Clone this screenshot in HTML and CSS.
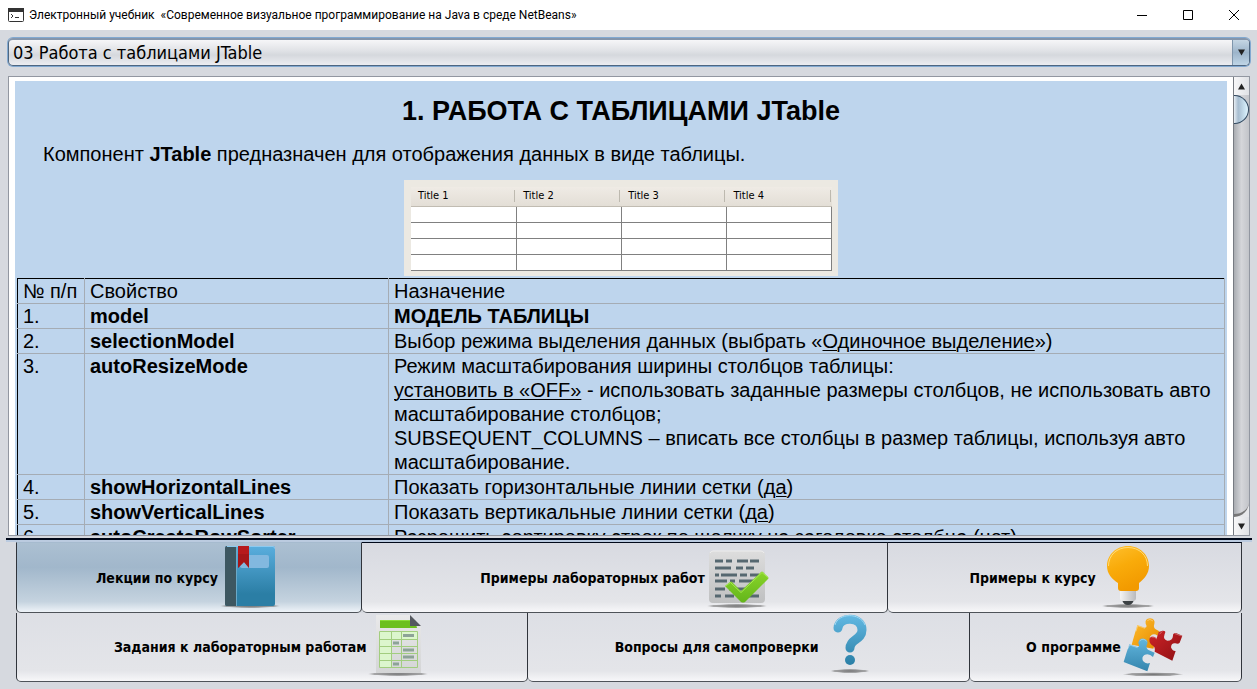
FILE: index.html
```html
<!DOCTYPE html>
<html lang="ru">
<head>
<meta charset="utf-8">
<title>Электронный учебник «Современное визуальное программирование на Java в среде NetBeans»</title>
<link rel="stylesheet" href="styles.css">
</head>
<body>
<div class="window">
  <header class="titlebar">
    <svg class="app-icon" viewBox="0 0 16 14"><rect x="0.5" y="0.5" width="15" height="13" rx="1" fill="#fff" stroke="#333"/><path d="M0 0h16v4H0z" fill="#333"/><path d="M3 6l2 2-2 2M7 9.500h4" fill="none" stroke="#333"/></svg>
    <span class="caption">Электронный учебник&nbsp; «Современное визуальное программирование на Java в среде NetBeans»</span>
    <div class="window-buttons">
      <button type="button" aria-label="Свернуть"><svg viewBox="0 0 12 12"><path d="M1 6.500h10"/></svg></button>
      <button type="button" aria-label="Развернуть"><svg viewBox="0 0 12 12"><path d="M1.500 1.500h9v9h-9z"/></svg></button>
      <button type="button" aria-label="Закрыть"><svg viewBox="0 0 12 12"><path d="M1 1l10 10M11 1L1 11"/></svg></button>
    </div>
  </header>

  <main class="workspace">
    <div class="combo">
      <select aria-label="Раздел"><option>03 Работа с таблицами JTable</option></select>
      <span class="combo-arrow"><svg viewBox="0 0 8 7"><path d="M0 0h8L4 7z"/></svg></span>
    </div>

    <section class="scroll-pane">
      <div class="viewport">
        <article class="document">
          <h1>1. РАБОТА С ТАБЛИЦАМИ JTable</h1>
          <p class="intro">Компонент <b>JTable</b> предназначен для отображения данных в виде таблицы.</p>
          <div class="sample">
            <table>
              <thead><tr><th>Title 1</th><th>Title 2</th><th>Title 3</th><th>Title 4</th></tr></thead>
              <tbody>
                <tr><td></td><td></td><td></td><td></td></tr>
                <tr><td></td><td></td><td></td><td></td></tr>
                <tr><td></td><td></td><td></td><td></td></tr>
                <tr><td></td><td></td><td></td><td></td></tr>
              </tbody>
            </table>
          </div>
          <table class="properties">
            <colgroup><col class="col-number"><col class="col-name"><col></colgroup>
            <tbody>
              <tr><td>№ п/п</td><td>Свойство</td><td>Назначение</td></tr>
              <tr><td>1.</td><td><b>model</b></td><td><b>МОДЕЛЬ ТАБЛИЦЫ</b></td></tr>
              <tr><td>2.</td><td><b>selectionModel</b></td><td>Выбор режима выделения данных (выбрать «<u>Одиночное выделение</u>»)</td></tr>
              <tr><td>3.</td><td><b>autoResizeMode</b></td><td>Режим масштабирования ширины столбцов таблицы:<br><u>установить в «OFF»</u> - использовать заданные размеры столбцов, не использовать авто масштабирование столбцов;<br>SUBSEQUENT_COLUMNS – вписать все столбцы в размер таблицы, используя авто масштабирование.</td></tr>
              <tr><td>4.</td><td><b>showHorizontalLines</b></td><td>Показать горизонтальные линии сетки (<u>да</u>)</td></tr>
              <tr><td>5.</td><td><b>showVerticalLines</b></td><td>Показать вертикальные линии сетки (<u>да</u>)</td></tr>
              <tr><td>6.</td><td><b>autoCreateRowSorter</b></td><td>Разрешить сортировку строк по щелчку на заголовке столбца (<u>нет</u>)</td></tr>
            </tbody>
          </table>
        </article>
      </div>
      <div class="scrollbar">
        <button type="button" class="up" aria-label="Вверх"><svg viewBox="0 0 8 7"><path d="M0 7h8L4 0z"/></svg></button>
        <div class="track"><div class="thumb"></div></div>
        <button type="button" class="down" aria-label="Вниз"><svg viewBox="0 0 8 7"><path d="M0 0h8L4 7z"/></svg></button>
      </div>
    </section>

    <div class="divider"></div>

    <nav class="tabs">
      <div class="tab-row first">
        <button type="button" class="tab lectures selected"><span>Лекции по курсу</span>
          <svg class="icon" viewBox="0 0 64 64">
            <defs><linearGradient id="cover" x2="0" y2="1"><stop stop-color="#5aaede"/><stop offset=".8" stop-color="#2b7ea5"/><stop offset="1" stop-color="#2b7ea5"/></linearGradient>
            <radialGradient id="shade"><stop stop-color="#555" stop-opacity=".8"/><stop offset=".8" stop-color="#777" stop-opacity=".6"/><stop offset="1" stop-color="#999" stop-opacity="0"/></radialGradient></defs>
            <ellipse cx="32" cy="62" rx="31" ry="2" fill="url(#shade)"/>
            <rect x="7" y="2" width="50" height="60" rx="2" fill="url(#cover)"/>
            <path d="M9 2h9v60H9q-2 0-2-2V4q0-2 2-2z" fill="#3d5761"/><path d="M18.500 2v60" stroke="#6aa9c8" fill="none"/>
            <path d="M9 2.500h46q1.500 0 1.500 2" stroke="#8ccaf0" fill="none"/>
            <rect x="22" y="11" width="29" height="13" rx="2" fill="#82b8df"/>
            <path d="M20 2h11v22l-5-6-6 6z" fill="#b7191c"/><path d="M20 10h11v14l-5-6-6 6z" fill="#941316" opacity=".5"/>
          </svg></button>
        <button type="button" class="tab examples"><span>Примеры лабораторных работ</span>
          <svg class="icon" viewBox="0 0 64 64">
            <defs><linearGradient id="card" x2="0" y2="1"><stop stop-color="#ddd"/><stop offset="1" stop-color="#bfc0c1"/></linearGradient><linearGradient id="tick" x2="0" y2="1"><stop stop-color="#8ad52a"/><stop offset="1" stop-color="#63b51a"/></linearGradient></defs>
            <ellipse cx="32" cy="62" rx="31" ry="2" fill="url(#shade)"/>
            <rect x="4" y="7" width="56" height="52" rx="4" fill="url(#card)"/><path d="M5 9q1-2 3-2h48q2 0 3 2" stroke="#eee" fill="none"/>
            <path d="M10 17h8m3 0h6m5 0h11m2 0h9M10 24h16m5 0h7m3 0h8M10 31h4m2 0h16m3 0h7m3 0h9M10 37h12m3 0h5m4 0h14M10 45h10m4 0h20M10 52h6m4 0h9m13 0h12" stroke="#566870" stroke-width="3" fill="none"/>
            <path d="M20 42l5-4q1-1 2 0l9 9 20-19q1-1 2 0l5 5q1 1 0 2L40 58q-2 1-4 0z" fill="url(#tick)"/><path d="M20.500 42l5-3.500 10.500 10L57 28.500l6 5" stroke="#a5e853" fill="none"/>
          </svg></button>
        <button type="button" class="tab course-examples"><span>Примеры к курсу</span>
          <svg class="icon" viewBox="0 0 64 64">
            <defs><linearGradient id="bulb" x1="0" y1="0" x2=".4" y2="1"><stop stop-color="#ffc02e"/><stop offset=".5" stop-color="#f9ab0a"/><stop offset="1" stop-color="#f29a00"/></linearGradient><linearGradient id="cap"><stop stop-color="#f4f4f4"/><stop offset="1" stop-color="#b9babd"/></linearGradient></defs>
            <ellipse cx="32" cy="62" rx="27" ry="2" fill="url(#shade)"/>
            <path d="M26 55h12q-1 6-6 6t-6-6z" fill="#3b4043"/>
            <path d="M24 47h16v7q0 3-3 3H27q-3 0-3-3z" fill="url(#cap)"/>
            <path d="M32 2c12 0 21 9 21 20 0 8-5 13-10 17v5q0 3-3 3H25q-3 0-3-3v-5c-6-4-11-9-11-17C11 11 20 2 32 2z" fill="url(#bulb)"/>
            <path d="M12.500 22C12.500 11 21 3.500 32 3.500S51.500 11 51.500 22" fill="none" stroke="#ffdc7a"/>
          </svg></button>
      </div>
      <div class="tab-row second">
        <button type="button" class="tab tasks"><span>Задания к лабораторным работам</span>
          <svg class="icon" viewBox="0 0 64 64">
            <defs><linearGradient id="paper" x2="0" y2="1"><stop stop-color="#e9e9ea"/><stop offset="1" stop-color="#d4d5d6"/></linearGradient></defs>
            <ellipse cx="32" cy="61" rx="31" ry="2" fill="url(#shade)"/>
            <path d="M10 2h34l11 11v47H10z" fill="url(#paper)"/>
            <path d="M14 7h35l2 8H14z" fill="#6dc01e"/><path d="M14 7.500h34" stroke="#8bdd3a"/>
            <path d="M44 2l11 11H44z" fill="#555960"/>
            <path d="M14 18h11v37H14zM25 18h27v8H25z" fill="#dcf6cd"/>
            <path d="M13.500 18.500h38v36h-38zM25.500 18v37M35.500 18v37M13 26.500h39M13 33.500h39M13 40.500h39M13 47.500h39" fill="none" stroke="#a2cd7f"/>
            <path d="M37 22.500h11M27 30h6M37 37h11M37 44h11M27 51h6" stroke="#8da397" stroke-width="3"/>
          </svg></button>
        <button type="button" class="tab questions"><span>Вопросы для самопроверки</span>
          <svg class="icon" viewBox="0 0 64 64">
            <defs><linearGradient id="ask" gradientUnits="userSpaceOnUse" x1="0" y1="2" x2="0" y2="52"><stop stop-color="#63b9e3"/><stop offset="1" stop-color="#2a7fa6"/></linearGradient></defs>
            <ellipse cx="31" cy="58" rx="20" ry="2" fill="url(#shade)"/>
            <path d="M19 15C20 3 43 3 43 17c0 10-12 9-12 18" fill="none" stroke="url(#ask)" stroke-width="9" stroke-linecap="round"/>
            <path d="M16 12C19 0 41-1 46 12" fill="none" stroke="#a1d8f2"/>
            <circle cx="31" cy="47" r="5" fill="url(#ask)"/>
          </svg></button>
        <button type="button" class="tab about"><span>О программе</span>
          <svg class="icon" viewBox="66 24 192 192">
            <defs><linearGradient id="gold" x2="1" y2="1"><stop stop-color="#ffbd2d"/><stop offset="1" stop-color="#e58b00"/></linearGradient><linearGradient id="ruby" x2="1" y2="1"><stop stop-color="#cf2327"/><stop offset="1" stop-color="#8c1014"/></linearGradient><linearGradient id="azure" x2="0" y2="1"><stop stop-color="#62b6de"/><stop offset="1" stop-color="#3585ad"/></linearGradient></defs>
            <ellipse cx="162" cy="208" rx="92" ry="6" fill="url(#shade)"/>
            <path d="M115 60L138 68Q146 66 140 56Q137 41 153 40Q170 42 166 57Q162 67 170 73L181 79L176 92Q162 82 153 95Q151 108 164 112L168 116L163 131L98 119L103 101L108 84Z" fill="url(#gold)"/>
            <path d="M179 81L190 77Q203 76 197 87Q191 104 205 107Q221 107 222 92Q221 84 231 84L250 92L242 113Q238 118 229 115Q217 113 216 127Q220 139 230 138L220 167L167 140Q170 124 158 120Q149 112 152 99Q162 90 173 100Z" fill="url(#ruby)"/>
            <path d="M91 118L115 126Q124 126 118 114Q120 99 135 101Q148 104 145 116Q139 127 147 134L167 143L162 156Q150 144 136 150Q127 156 132 168Q140 178 153 174L145 199L74 171L82 145Z" fill="url(#azure)"/>
            <path d="M111 79L116 62L138 70M145 47Q152 39 162 48M181 88L190 79M158 96Q166 94 174 102M228 86L248 93M86 132L92 120L116 128M122 108Q133 97 143 109" fill="none" stroke="#fff" stroke-width="3" opacity=".35"/>
          </svg></button>
      </div>
    </nav>
  </main>
</div>
</body>
</html>
```
FILE: styles.css
```css
* { box-sizing: border-box; }

body {
  margin: 0;
  background: #d6d9df;
  color: #000;
  font-family: "Liberation Sans", Arial, sans-serif;
}

button {
  margin: 0;
  padding: 0;
  border: 0;
  background: none;
  color: #000;
}

.window {
  display: flex;
  flex-direction: column;
  height: 100vh;
  overflow: hidden;
}

.titlebar {
  display: flex;
  align-items: center;
  flex: none;
  height: 30px;
  padding-left: 8px;
  background: #fff;
}

.app-icon { width: 16px; height: 14px; }

.caption {
  margin-left: 5px;
  font: 12px Roboto, "Noto Sans", sans-serif;
}

.window-buttons { display: flex; margin-left: auto; }

.window-buttons button {
  display: grid;
  place-items: center;
  width: 46px;
  height: 28px;
}

.window-buttons svg {
  width: 12px;
  height: 12px;
  fill: none;
  stroke: #000;
}

.workspace {
  display: flex;
  flex-direction: column;
  flex: 1;
  min-height: 0;
  padding: 8px 5px 7px 6px;
}

.combo {
  display: flex;
  flex: none;
  height: 28px;
  margin: 0 2px;
  border: 1px solid #4f6781;
  border-top: 2px solid #8596ac;
  border-radius: 5px;
  box-shadow: 0 0 0 1px #82a9d1;
  background: linear-gradient(#f6f6f8, #dfe1e5 45%, #d5d8dd 60%, #ecedf1);
  overflow: hidden;
}

.combo select {
  flex: 1;
  min-width: 0;
  padding: 0 4px;
  border: 0;
  outline: 0;
  background: none;
  appearance: none;
  color: #000;
  font: 18px "DejaVu Sans Condensed", "Noto Sans", sans-serif;
}

.combo-arrow {
  display: grid;
  place-items: center;
  width: 17px;
  border-left: 1px solid #7f96ac;
  background: linear-gradient(#c5d6e4, #9cb4ca 50%, #bfd5e6);
}

.combo-arrow svg, .scrollbar svg { width: 7px; height: 7px; fill: #222; }

.scroll-pane {
  display: flex;
  flex: 1;
  min-height: 0;
  margin: 10px 2px 2px;
  border: 1px solid #9297a1;
}

.viewport {
  flex: 1;
  padding: 4px 6px 0;
  background: #fff;
  overflow: hidden;
}

.document {
  padding: 14px 2px;
  background: #bed5ed;
  font-size: 20px;
  line-height: 24px;
}

.document h1 {
  margin: 0;
  font-size: 27px;
  line-height: 32px;
  text-align: center;
}

.intro { margin: 15px 0 14px 26px; }

.sample {
  width: 434px;
  margin: 0 auto 2px;
  padding: 7px 6px 5px 7px;
  background: #ece9e2;
}

.sample table {
  width: 100%;
  border-collapse: collapse;
  table-layout: fixed;
}

.sample th {
  height: 19px;
  padding: 0 7px;
  border-bottom: 1px solid #c1bcb2;
  background: linear-gradient(#bdb9af, #bdb9af) right 1px center / 1px 12px no-repeat, linear-gradient(#efebe5, #e3ded6);
  font: 11px/18px "DejaVu Sans Condensed", sans-serif;
  text-align: left;
}

.sample td {
  height: 16px;
  padding: 0;
  border-right: 1px solid #808080;
  border-bottom: 1px solid #808080;
  background: #fff;
}

.properties {
  width: 100%;
  border-collapse: collapse;
  table-layout: fixed;
  border-top: 1px solid #000;
  border-left: 1px solid #000;
}

.col-number { width: 67px; }
.col-name { width: 304px; }

.properties td {
  padding: 0 5px;
  border: 1px solid #a5acb4;
  vertical-align: top;
}

.properties tr:first-child td { border-top-color: #000; }
.properties td:first-child { border-left-color: #000; }
.properties u { text-decoration-thickness: 1px; text-underline-offset: 2px; }

.scrollbar {
  display: flex;
  flex-direction: column;
  width: 16px;
  border-left: 1px solid #777b82;
  background: #e7e8eb;
}

.scrollbar button {
  display: grid;
  place-items: center;
  flex: none;
  height: 18px;
  background: linear-gradient(90deg, #f7f7f8, #dfe1e5);
}

.track {
  flex: 1;
  border-bottom: 3px solid #777;
  border-radius: 0 0 15px 0;
  background: linear-gradient(90deg, #aaadb2, #d5d6da 50%, #c2c4c9);
}

.thumb {
  height: 29px;
  border: 1px solid #314960;
  border-left: 0;
  border-radius: 0 15px 15px 0;
  background: linear-gradient(90deg, #e6edf3, #a7bdd0 30%, #cde5f3 80%, #e3f4fc);
}

.divider {
  flex: none;
  height: 4px;
  border-top: 2px solid #000819;
  background: #bbcbe0;
}

.tabs {
  flex: none;
  margin: 0 10px;
}

.tab-row { display: flex; }

.tab {
  display: flex;
  align-items: center;
  justify-content: center;
  flex-basis: 0;
  min-width: 0;
  height: 69px;
  border-right: 1px solid #30343b;
  border-bottom: 1px solid #4e5359;
  border-radius: 0 0 5px 5px;
  background: linear-gradient(#dddfe5, #e4e5e9 85%, #f7f7f9);
  font: bold 14px "DejaVu Sans Condensed", "Noto Sans", sans-serif;
  white-space: nowrap;
}

.first .tab {
  height: 71px;
  border-top: 1px solid #000819;
  background: linear-gradient(#d8dae1, #e4e5e9 85%, #f7f7f9);
}

.tab:first-child { border-left: 1px solid #30343b; }

.first .selected {
  border-top-color: #a6bbcf;
  background: linear-gradient(#acc0d2, #a1b7cb 35%, #c5d3df 85%, #eef3f8);
}

.lectures { flex-grow: 345; }
.examples { flex-grow: 527; }
.course-examples { flex-grow: 354; }
.tasks { flex-grow: 512; }
.questions { flex-grow: 442; }
.about { flex-grow: 272; }

.icon {
  flex: none;
  width: 64px;
  height: 64px;
  margin-bottom: 4px;
}
```
